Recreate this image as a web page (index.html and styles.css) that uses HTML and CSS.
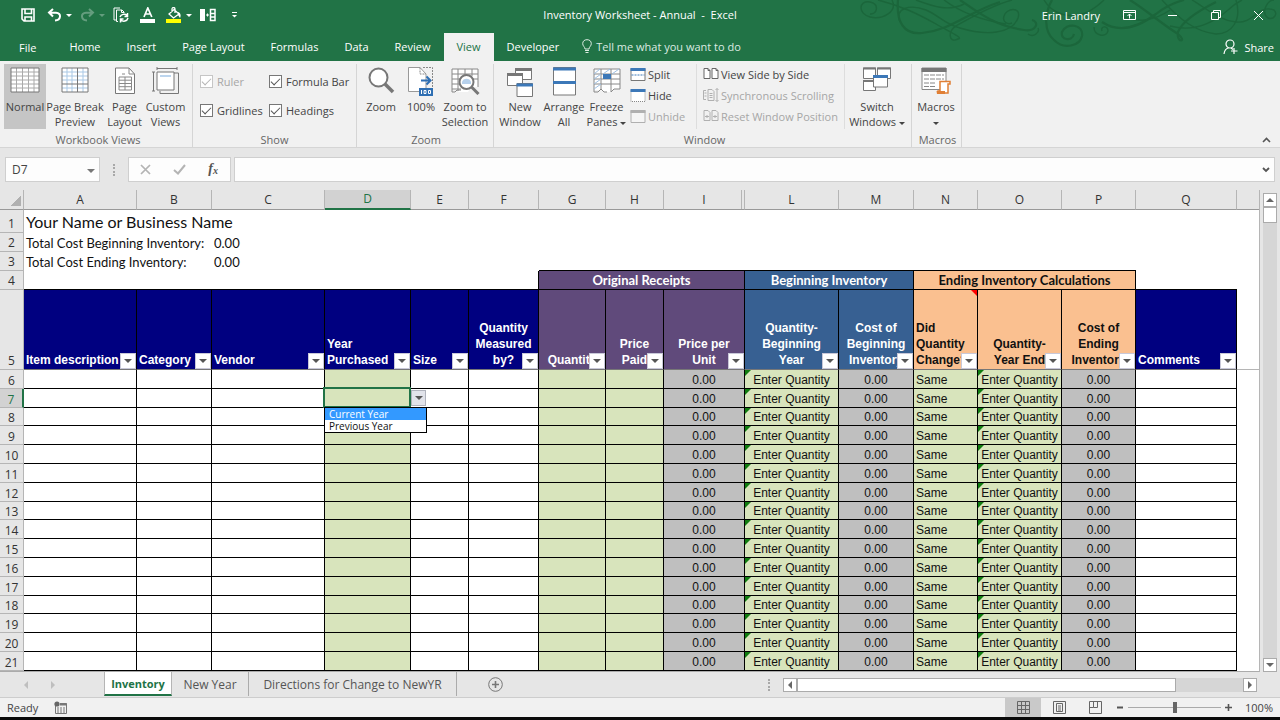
FILE: index.html
```html
<!DOCTYPE html>
<html lang="en">
<head>
<meta charset="utf-8">
<title>Inventory Worksheet - Annual - Excel</title>
<link rel="stylesheet" href="styles.css">
</head>
<body>
<header class="top">
  <svg class="swirl" viewBox="0 0 440 61" width="440" height="61" aria-hidden="true">
    <g class="swirl-lines">
      <path d="M52 0C58 12 42 20 30 17C18 14 18 0 30 2C40 4 37 15 30 14"/>
      <path d="M38 0C62 6 78 14 96 24C110 32 124 38 118 39C108 44 108 30 116 26C130 18 150 6 172 0"/>
      <path class="bold" d="M58 0C56 22 64 35 82 33C112 30 128 12 160 2"/>
      <path d="M60 22C54 8 70 4 86 10C100 16 104 24 120 28C146 36 172 34 178 18C182 6 166 8 164 16C162 22 168 25 172 23"/>
      <path d="M76 0C92 6 108 12 124 4M104 0C120 12 140 20 166 24"/>
      <path class="bold" d="M120 0C140 14 156 26 184 30C196 32 200 22 192 20M212 0C204 14 204 32 214 40C224 50 240 46 242 36C244 24 226 22 222 32C220 40 232 42 234 34"/>
      <path d="M204 0C212 14 230 20 248 12C258 6 262 2 264 0M188 34C194 38 200 32 198 28M254 27C254 36 266 38 268 31C268 25 260 26 262 31"/>
      <path class="bold" d="M262 22C280 34 300 26 316 14C326 6 336 2 344 0M290 0C306 10 322 24 338 34C348 42 336 44 338 32C342 22 356 12 376 2"/>
      <path d="M322 0C340 20 356 32 376 34C392 34 402 20 396 0M330 26C352 32 372 24 388 10C394 4 398 2 402 0"/>
      <path d="M282 16C296 24 316 20 330 10M352 0C366 8 378 20 396 22C414 24 418 4 434 10C438 14 434 20 428 18C420 12 428 0 434 0"/>
    </g>
  </svg>
  <div class="title-bar">
    <div class="quick">
      <button aria-label="Save"><svg width="14" height="14" viewBox="0 0 14 14"><path d="M1 1H13V13H3L1 11Z M4 1V5.500H10.500V1 M4 13V9H10.500V13" fill="none" stroke="#fff" stroke-width="1.600"/></svg></button>
      <button class="split" aria-label="Undo"><svg width="15" height="14" viewBox="0 0 15 14"><path d="M6 1L2 4.500L6 8.500M2 4.700H9C15 5 14 12 8 12.500" fill="none" stroke="#fff" stroke-width="2"/></svg><i class="caret"></i></button>
      <button class="split faded" aria-label="Redo"><svg width="15" height="14" viewBox="0 0 15 14"><path d="M9 1L13 4.500L9 8.500M13 4.700H6C0 5 1 12 7 12.500" fill="none" stroke="#fff" stroke-width="2"/></svg><i class="caret"></i></button>
      <button aria-label="Refresh"><svg width="16" height="16" viewBox="0 0 16 16" fill="none" stroke="#fff"><path d="M4 13H1V1H7M5 14.500H3.500V3H9L11 5V6M8.500 3V5.500H11"/><path d="M7 10C8 7 12 6.500 14 8.500M14.500 6V9.500H11.500M15 11C14 14.500 10 15 8 13M7.500 15.500V12H10.500" stroke-width="1.500"/></svg></button>
      <button aria-label="Font Color"><svg width="16" height="16" viewBox="0 0 16 16"><path d="M4 10L7.800 1L11.800 10M5.300 7H10.500" fill="none" stroke="#fff" stroke-width="1.700"/><path d="M0 12H15V16H0Z" fill="#fff"/></svg></button>
      <button class="split" aria-label="Fill Color"><svg width="16" height="16" viewBox="0 0 16 16"><path d="M3 7L8 2.500L13 7L7.500 11Z M6 5V2C6 0 9 0 9 2V6" fill="none" stroke="#fff" stroke-width="1.300"/><path d="M12 5C15 6 15 9 14 11L12 8Z" fill="#fff"/><path d="M0 12H15V16H0Z" fill="#ff0"/></svg><i class="caret"></i></button>
      <button aria-label="Column Width"><svg width="16" height="14" viewBox="0 0 16 14"><path d="M0 1H5V13H0Z" fill="#fff"/><path d="M6 7H9M7.500 5.500V8.500" stroke="#fff"/><path d="M10.500 1.500H15V12.500H10.500ZM10.500 5.500H15M10.500 9H15" fill="none" stroke="#fff" stroke-width="1.500"/></svg></button>
      <button aria-label="Customize Quick Access Toolbar"><svg width="7" height="8" viewBox="0 0 7 8"><path d="M1 1.500H6" stroke="#fff"/><path d="M1 4H6L3.500 6.500Z" fill="#fff"/></svg></button>
    </div>
    <h1 class="doc-title">Inventory Worksheet - Annual &nbsp;-&nbsp; Excel</h1>
    <div class="window-tools">
      <span class="user">Erin Landry</span>
      <button aria-label="Ribbon Display Options"><svg width="13" height="12" viewBox="0 0 13 12" fill="none" stroke="#fff"><path d="M.5 1.500H12.500V10.500H.5ZM.5 3.500H12.500M6.500 9.500V5M4.500 7L6.500 5L8.500 7"/></svg></button>
      <button aria-label="Minimize"><svg width="10" height="10" viewBox="0 0 10 10"><path d="M0 5.500H9" stroke="#fff"/></svg></button>
      <button aria-label="Restore"><svg width="10" height="10" viewBox="0 0 10 10" fill="none" stroke="#fff"><path d="M.5 2.500H7.500V9.500H.5ZM2.500 2.500V.5H9.500V7.500H7.500"/></svg></button>
      <button aria-label="Close"><svg width="11" height="11" viewBox="0 0 11 11"><path d="M1 1L10 10M10 1L1 10" stroke="#fff"/></svg></button>
    </div>
  </div>
  <nav class="tabs">
    <button class="file">File</button><button>Home</button><button>Insert</button><button>Page Layout</button><button>Formulas</button><button>Data</button><button>Review</button><button class="current">View</button><button>Developer</button>
    <button class="tell"><svg width="10" height="15" viewBox="0 0 10 15" fill="none" stroke="#dcebe2"><path d="M3 10C3 8 .7 7 .7 4.700C.7 2 2.500 .7 5 .7S9.300 2 9.300 4.700C9.300 7 7 8 7 10ZM3 11.500H7M3.500 13.500H6.500"/></svg>Tell me what you want to do</button>
    <button class="share"><svg width="15" height="16" viewBox="0 0 15 16" fill="none" stroke="#fff" stroke-width="1.200"><circle cx="7" cy="5" r="4"/><path d="M1 15C1.500 11 3 9.500 5.500 9M8 9L10 10.500M11 9V15M8 12H14.500"/></svg>Share</button>
  </nav>
</header>

<section class="ribbon">
  <div class="group views">
    <div class="tools">
      <button class="big active"><svg width="30" height="26" viewBox="0 0 30 26"><path d="M1 1H29V25H1Z" fill="#fff"/><path d="M1 5H29M1 9H29M1 13H29M1 17H29M1 21H29M6.500 1V25M12.500 1V25M18.500 1V25M24 1V25" stroke="#aaa"/><path d="M1 1H29V25H1Z" fill="none" stroke="#777"/></svg><span>Normal</span></button>
      <button class="big wide"><svg width="28" height="26" viewBox="0 0 28 26"><path d="M1 1H27V25H1Z" fill="#fff"/><path d="M1 5H27M1 9H27M1 13H27M1 21H27M6 1V25M11 1V25M22 1V25" stroke="#a9c8e5"/><path d="M1 1H27V25H1ZM1 17H27M16.500 1V25" fill="none" stroke="#777"/></svg><span>Page Break<br>Preview</span></button>
      <button class="big slim"><svg width="20" height="28" viewBox="0 0 20 28"><path d="M.5 1H14L19.500 7V26.500H.5Z" fill="#fff" stroke="#777"/><path d="M14 1V7H19.500M4 10H16.500V23H4ZM4 13.200H16.500M4 16.500H16.500M4 19.700H16.500M10 10V23M7 7H10" fill="none" stroke="#888"/></svg><span>Page<br>Layout</span></button>
      <button class="big slim"><svg width="27" height="28" viewBox="0 0 27 28" fill="none" stroke="#777"><path d="M5 1.500H25M5 0V3M25 0V3M1.500 5V24M0 5H3M0 24H3M22 6H26.500V26.500H8V24"/><path d="M5 5H22V23H5Z" fill="#fff"/><path d="M8 8H19V10H8Z" fill="#bcd5ee" stroke="none"/></svg><span>Custom<br>Views</span></button>
    </div>
    <p>Workbook Views</p>
  </div>
  <div class="group show">
    <div class="checks">
      <label class="off"><input type="checkbox" checked disabled>Ruler</label>
      <label><input type="checkbox" checked>Formula Bar</label>
      <label><input type="checkbox" checked>Gridlines</label>
      <label><input type="checkbox" checked>Headings</label>
    </div>
    <p>Show</p>
  </div>
  <div class="group zoom">
    <div class="tools">
      <button class="big"><svg width="27" height="28" viewBox="0 0 27 28"><circle cx="10.500" cy="10.500" r="9" fill="#fff" stroke="#777" stroke-width="2"/><path d="M17 17L25 25" stroke="#777" stroke-width="3.500"/></svg><span>Zoom</span></button>
      <button class="big slim"><svg width="26" height="29" viewBox="0 0 26 29"><path d="M.5 .5H12L18 7V24.500H.5Z" fill="#fff" stroke="#999"/><path d="M12 .5V7H18M15 .5H24.500V20" fill="none" stroke="#888" stroke-dasharray="2 1"/><path d="M13 13.500H22M18.500 9.500L22.500 13.500L18.500 17.500" fill="none" stroke="#2f6fb3" stroke-width="2"/><path d="M11 21H25V29H11Z" fill="#2f6fb3"/><path d="M13.500 23V27M16 23.500H18V26.500H16ZM20.500 23.500H22.500V26.500H20.500Z" fill="none" stroke="#fff"/></svg><span>100%</span></button>
      <button class="big"><svg width="29" height="28" viewBox="0 0 29 28"><path d="M1 2H27V20H20L17 25H8L5 23H1Z" fill="#fff"/><path d="M1 25V2H27V20M1 7H27M1 12H27M1 17H12M1 22H10M7 2V24M14 2V9M21 2V9M1 25H4L6 23H10" fill="none" stroke="#888"/><circle cx="15.500" cy="15" r="7" fill="#fff" stroke="#777" stroke-width="2"/><path d="M11 15A4.700 4.700 0 0 1 20 15V17H11Z" fill="#b7d1ec"/><path d="M20.500 20L27.500 27" stroke="#777" stroke-width="3"/></svg><span>Zoom to<br>Selection</span></button>
    </div>
    <p>Zoom</p>
  </div>
  <div class="group window">
    <div class="tools">
      <button class="big"><svg width="26" height="30" viewBox="0 0 26 30" fill="#fff" stroke="#777"><path d="M8.500 1.500H24.500V12.500H8.500Z"/><path d="M8 2.500H25" stroke-width="3"/><path d="M.5 6.500H15.500V18.500H.5Z"/><path d="M0 7.500H16" stroke-width="3"/><path d="M10 16.500H25.500V29.500H10Z"/><path d="M9.500 18H26" stroke="#3c78b8" stroke-width="3"/></svg><span>New<br>Window</span></button>
      <button class="big"><svg width="23" height="29" viewBox="0 0 23 29"><path d="M.5 .5H22.500V28H.5Z" fill="#fff" stroke="#777"/><path d="M0 2H23M0 15.500H23" stroke="#3c78b8" stroke-width="3"/></svg><span>Arrange<br>All</span></button>
      <button class="big slim"><svg width="28" height="27" viewBox="0 0 28 27"><path d="M1 2H27V22H21L18 25H11L8 23H1Z" fill="#fff"/><path d="M1 7H27M1 12H27M1 17H27M8 2V23M18 2V25M1 25V2H27V22H21L18 25M1 25H5L8 22L11 25H14" fill="none" stroke="#888"/><path d="M1 7L7 2M1 12L8 7M1 17L8 12M1 22L8 17M10 7L17 2M19 7L26 2" stroke="#9fc0e2"/><path d="M10 7H18V12H10Z" fill="#3c78b8"/></svg><span>Freeze<br>Panes <i class="caret"></i></span></button>
      <div class="small">
        <button><svg width="15" height="13" viewBox="0 0 15 13"><path d="M.5 .5H14.500V12.500H.5Z" fill="#fff" stroke="#777"/><path d="M0 1.500H15" stroke="#3c78b8" stroke-width="3"/><path d="M1 7H14" stroke="#3c78b8" stroke-dasharray="2 1"/></svg>Split</button>
        <button><svg width="15" height="13" viewBox="0 0 15 13"><path d="M.5 .5H14.500V12.500H.5Z" fill="#fff" stroke="#888" stroke-dasharray="1 1"/><path d="M0 1.500H15" stroke="#3c78b8" stroke-width="3"/></svg>Hide</button>
        <button disabled><svg width="15" height="13" viewBox="0 0 15 13"><path d="M.5 .5H14.500V12.500H.5Z" fill="#f5f5f5" stroke="#b0b0b0"/><path d="M0 1.500H15" stroke="#b0b0b0" stroke-width="3"/></svg>Unhide</button>
      </div>
      <div class="small side">
        <button><svg width="16" height="12" viewBox="0 0 16 12" fill="#fff" stroke="#666"><path d="M1 .5H5L7 2.500V10.500H1ZM9 .5H13L15 2.500V10.500H9ZM5 .5V2.500H7M13 .5V2.500H15"/></svg>View Side by Side</button>
        <button disabled><svg width="16" height="14" viewBox="0 0 16 14" fill="none" stroke="#b0b0b0"><path d="M3 2.500H.5V11.500H3M5 1.500H9L11 3.500V12.500H5ZM6.500 5.500H9.500M6.500 7.500H9.500M6.500 9.500H9.500M1.500 5H3.500M1.500 8H3.500M14 .5V13.500M12.500 2L14 .5L15.500 2M12.500 12L14 13.500L15.500 12"/></svg>Synchronous Scrolling</button>
        <button disabled><svg width="16" height="12" viewBox="0 0 16 12" fill="none" stroke="#b0b0b0"><path d="M1 .5H5L7 2.500V10.500H1ZM9 .5H13L15 2.500V10.500H9ZM2 6.500H6M4 5V8M10 6.500H14M12 5V8"/></svg>Reset Window Position</button>
      </div>
      <button class="big switch"><svg width="28" height="25" viewBox="0 0 28 25" fill="#fff" stroke="#777"><path d="M.5 1H12.500V11.500H.5ZM14.500 1H27.500V11.500H14.500ZM.5 13.500H12.500V23.500H.5Z"/><path d="M0 1.500H13M14 1.500H28M0 14H13" stroke-width="2"/><path d="M10.500 8.500H24.500V20H10.500Z"/><path d="M10 9.500H25" stroke="#3c78b8" stroke-width="3"/></svg><span>Switch<br>Windows <i class="caret"></i></span></button>
    </div>
    <p>Window</p>
  </div>
  <div class="group macros">
    <div class="tools">
      <button class="big"><svg width="30" height="28" viewBox="0 0 30 28"><path d="M1 1H25V22.500H1Z" fill="#fff" stroke="#888"/><path d="M.5 3H25.500" stroke="#777" stroke-width="4"/><path d="M3 8H23M3 12H23M3 16H15M3 19.500H14" stroke="#888" stroke-dasharray="5 1"/><path d="M19 14.500H29V17H27V26H17V24H19Z" fill="#fff" stroke="#e07f35" stroke-width="1.500"/><path d="M15.500 24H24V27H16Z" fill="#e07f35"/></svg><span>Macros<br><i class="caret"></i></span></button>
    </div>
    <p>Macros</p>
  </div>
  <button class="collapse" aria-label="Collapse the Ribbon"><svg width="9" height="6" viewBox="0 0 9 6"><path d="M1 5L4.500 1.500L8 5" fill="none" stroke="#555" stroke-width="1.600"/></svg></button>
</section>

<section class="formula">
  <div class="name-box"><input aria-label="Name Box" value="D7"><button aria-label="Name list"><i class="caret"></i></button></div>
  <span class="grip"></span>
  <div class="fx">
    <button aria-label="Cancel"><svg width="11" height="11" viewBox="0 0 11 11"><path d="M1 1L10 10M10 1L1 10" stroke="#b4b4b4" stroke-width="1.700"/></svg></button>
    <button aria-label="Enter"><svg width="13" height="11" viewBox="0 0 13 11"><path d="M1 6L5 9.500L12 1" fill="none" stroke="#b4b4b4" stroke-width="2"/></svg></button>
    <button class="fx-label" aria-label="Insert Function">f<sub>x</sub></button>
  </div>
  <div class="entry"><input aria-label="Formula Bar"><button aria-label="Expand Formula Bar"><svg width="8" height="6" viewBox="0 0 8 6"><path d="M1 1L4 4L7 1" fill="none" stroke="#555" stroke-width="1.800"/></svg></button></div>
</section>

<main class="sheet">
  <div class="grid-area">
    <table class="grid">
      <colgroup><col class="w-num"><col class="w-a"><col class="w-b"><col class="w-a"><col class="w-d"><col class="w-e"><col class="w-f"><col class="w-g"><col class="w-e"><col class="w-i"><col class="w-l"><col class="w-b"><col class="w-n"><col class="w-o"><col class="w-p"><col class="w-q"><col></colgroup>
      <thead>
        <tr class="letters"><th class="corner"></th><th>A</th><th>B</th><th>C</th><th class="picked">D</th><th>E</th><th>F</th><th>G</th><th>H</th><th class="hidden-next">I</th><th>L</th><th>M</th><th>N</th><th>O</th><th>P</th><th>Q</th><th></th></tr>
      </thead>
      <tbody class="summary">
        <tr class="r1"><th>1</th><td colspan="3">Your Name or Business Name</td><td colspan="13"></td></tr>
        <tr><th>2</th><td colspan="2">Total Cost Beginning Inventory:</td><td>0.00</td><td colspan="13"></td></tr>
        <tr class="r3"><th>3</th><td colspan="2">Total Cost Ending Inventory:</td><td>0.00</td><td colspan="3"></td><td colspan="8" class="lid"></td><td colspan="2"></td></tr>
        <tr class="bands"><th>4</th><td colspan="6" class="edge"></td><td colspan="3" class="purple">Original Receipts</td><td colspan="2" class="steel">Beginning Inventory</td><td colspan="3" class="peach">Ending Inventory Calculations</td><td class="under"></td><td></td></tr>
      </tbody>
      <tbody class="heads"><tr id="heads"><th>5</th></tr></tbody>
      <tbody class="rows" id="rows"></tbody>
    </table>
  </div>
  <div class="vscroll">
    <button aria-label="Scroll up"><i class="tri up"></i></button>
    <div class="thumb"></div>
    <div class="track"></div>
    <button aria-label="Scroll down"><i class="tri down"></i></button>
  </div>
</main>

<nav class="sheet-bar">
  <div class="sheet-nav"><i class="tri left"></i><i class="tri right"></i></div>
  <div class="sheet-tabs">
    <button class="current">Inventory</button><button class="year">New Year</button><button class="dir">Directions for Change to NewYR</button>
    <button class="add" aria-label="New sheet"><svg width="15" height="15" viewBox="0 0 15 15" fill="none" stroke="#777"><circle cx="7.500" cy="7.500" r="6.800"/><path d="M7.500 4V11M4 7.500H11" stroke-width="1.600"/></svg></button>
  </div>
  <span class="grip"></span>
  <div class="hscroll">
    <button aria-label="Scroll left"><i class="tri left"></i></button>
    <div class="thumb"></div><div class="track"></div>
    <button aria-label="Scroll right"><i class="tri right"></i></button>
  </div>
</nav>

<footer class="status">
  <span class="ready">Ready</span>
  <button class="rec" aria-label="Record Macro"><svg width="13" height="13" viewBox="0 0 13 13"><path d="M1.500 5V12.500H12.500V2.500H6" fill="none" stroke="#777"/><path d="M6 2H12.500V4.500H6Z" fill="#777"/><circle cx="3" cy="3" r="2.600" fill="#666"/><path d="M3 7H11M3 9H11M3 11H11" stroke="#777" stroke-dasharray="2 1"/></svg></button>
  <div class="status-right">
    <button class="mode on" aria-label="Normal view"><svg width="13" height="13" viewBox="0 0 13 13"><path d="M.5 .5H12.500V12.500H.5ZM.5 4.500H12.500M.5 8.500H12.500M4.500 .5V12.500M8.500 .5V12.500" fill="none" stroke="#666"/></svg></button>
    <button class="mode" aria-label="Page layout view"><svg width="13" height="13" viewBox="0 0 13 13"><path d="M.5 .5H12.500V12.500H.5ZM3.500 2.500H9.500V10.500H3.500ZM5 5H8M5 7H8M5 9H8" fill="none" stroke="#666"/></svg></button>
    <button class="mode" aria-label="Page break view"><svg width="13" height="13" viewBox="0 0 13 13"><path d="M.5 .5H12.500V12.500H.5ZM4.500 .5V6.500H.500M4.500 6.500H8.500V.5" fill="none" stroke="#666"/></svg></button>
    <button class="step" aria-label="Zoom out"><svg width="7" height="7" viewBox="0 0 7 7"><path d="M0 3.500H6" stroke="#555" stroke-width="2"/></svg></button>
    <input type="range" aria-label="Zoom" min="0" max="100" value="50">
    <button class="step" aria-label="Zoom in"><svg width="7" height="7" viewBox="0 0 7 7"><path d="M0 3.500H7M3.500 0V7" stroke="#555" stroke-width="1.600"/></svg></button>
    <span class="percent">100%</span>
  </div>
</footer>
<script src="sheet.js"></script>
</body>
</html>
```

FILE: styles.css
```css
* { box-sizing: border-box; }
body { margin: 0; height: 100vh; display: flex; flex-direction: column; overflow: hidden; background: #e6e6e6; color: #444; font-family: "Open Sans", "Noto Sans", sans-serif; font-size: 11px; line-height: 15px; border-bottom: 3px solid #0a0a0a; }
button { font: inherit; color: inherit; background: none; border: 0; padding: 0; }
input { font: inherit; color: inherit; }
p, h1 { margin: 0; }
svg { display: block; flex: none; }
.caret { display: inline-block; border: 3px solid transparent; border-top-color: currentColor; border-bottom: 0; vertical-align: middle; }
.tri { display: block; width: 0; height: 0; border: 4px solid transparent; }
.tri.up { border-bottom-color: #666; border-top: 0; }
.tri.down { border-top-color: #666; border-bottom: 0; }
.tri.left { border-right-color: #666; border-left: 0; }
.tri.right { border-left-color: #666; border-right: 0; }

.top { position: relative; flex: none; background: #217346; color: #fff; }
.swirl { position: absolute; top: 0; right: 0; }
.swirl-lines { fill: none; stroke: #1b663b; stroke-width: 1.4; }
.swirl-lines .bold { stroke-width: 2.2; }
.title-bar { position: relative; display: grid; grid-template-columns: 1fr auto 1fr; align-items: center; height: 30px; }
.quick { display: flex; padding-left: 14px; }
.quick button { width: 27px; height: 30px; display: flex; align-items: center; justify-content: center; }
.quick .split { width: 33px; justify-content: flex-end; gap: 4px; padding-right: 2px; }
.quick .faded { opacity: .3; }
.doc-title { font-size: 11px; font-weight: 400; line-height: 14px; }
.window-tools { display: flex; justify-content: flex-end; align-items: center; }
.user { margin-right: 8px; }
.window-tools button { width: 43px; height: 29px; display: grid; place-items: center; }
.tabs { position: relative; display: flex; height: 31px; padding-top: 3px; }
.tabs button { padding: 0 13px 1px; }
.tabs .file { padding: 0 20px 0 19px; }
.tabs .current { background: #f1f1f1; color: #217346; }
.tabs .tell { display: flex; align-items: center; gap: 4px; color: #dcebe2; padding-left: 10px; }
.tabs .share { display: flex; align-items: center; gap: 6px; margin-left: auto; padding: 0 6px; }

.ribbon { position: relative; flex: none; display: flex; height: 87px; padding: 3px 0 0; background: #f1f1f1; border-bottom: 1px solid #d5d5d5; }
.group { display: flex; flex-direction: column; justify-content: space-between; border-right: 1px solid #d5d5d5; }
.group p { text-align: center; color: #666; }
.views { width: 193px; padding-left: 4px; }
.show { width: 164px; }
.zoom { width: 137px; padding-left: 2px; }
.window { width: 418px; padding-left: 4px; }
.macros { width: 50px; padding-left: 2px; }
.tools { display: flex; }
.big { width: 44px; height: 65px; display: flex; flex-direction: column; align-items: center; white-space: nowrap; }
.big svg { margin: 3px 0 auto; }
.big span { min-height: 30px; }
.views .active { width: 42px; background: #c5c5c5; }
.big.wide { width: 58px; }
.big.slim { width: 41px; }
.zoom .slim { width: 36px; }
.zoom .big:last-child { width: 52px; }
.small { display: flex; flex-direction: column; gap: 5px; width: 69px; padding: 2px 0 0 3px; }
.small button { display: flex; align-items: center; gap: 2px; white-space: nowrap; height: 16px; }
.small button:disabled { color: #a6a6a6; }
.small svg { width: 16px; }
.small.side { width: 149px; border-left: 1px solid #ddd; padding-left: 6px; border-right: 1px solid #ddd; }
.switch { width: 64px; }
.checks { display: grid; grid-template-columns: 69px 1fr; row-gap: 14px; padding: 10px 0 0 7px; white-space: nowrap; }
.checks label { display: flex; align-items: center; gap: 4px; }
.checks .off { color: #a6a6a6; }
.checks input { appearance: none; width: 13px; height: 13px; margin: 0; border: 1px solid #777; background: #fff; display: grid; place-items: center; }
.checks input::before { content: ""; width: 8px; height: 4px; border: solid #555; border-width: 0 0 1px 1px; transform: rotate(-45deg); margin-bottom: 3px; }
.checks input:disabled { border-color: #c6c6c6; }
.checks input:disabled::before { border-color: #b5b5b5; }
.collapse { margin: auto 9px 1px auto; height: 12px; }

.formula { flex: none; display: flex; height: 42px; padding: 9px 5px 8px; }
.name-box, .fx, .entry { display: flex; align-items: center; background: #fdfdfd; border: 1px solid #cfcfcf; }
.name-box { width: 95px; }
.name-box input, .entry input { flex: 1; min-width: 0; border: 0; background: none; outline: 0; padding: 0 6px; font-size: 12px; }
.name-box button, .entry button { padding: 0 4px; }
.name-box .caret { border-width: 4px 4px 0; color: #777; }
.grip { width: 2px; height: 12px; margin: auto 13px; border-left: 2px dotted #a8a8a8; }
.fx { width: 103px; margin-right: 3px; }
.fx button { flex: 1; display: grid; place-items: center; }
.fx .fx-label { display: block; font: italic bold 14px/16px "Liberation Serif", serif; color: #555; }
.fx-label sub { font-size: 10px; vertical-align: -1px; }
.entry { flex: 1; }

.sheet { flex: 1; min-height: 0; display: flex; }
.grid-area { flex: 1; min-width: 0; overflow: hidden; background: #fff; border-right: 1px solid #b5b5b5; border-bottom: 1px solid #ababab; }
.grid { width: 100%; table-layout: fixed; border-collapse: separate; border-spacing: 0; color: #111; font: 12px/16px "Liberation Sans", Arial, sans-serif; }
.grid td, .grid th { padding: 0 2px; position: relative; white-space: nowrap; }
.w-num { width: 24px; } .w-a { width: 113px; } .w-b { width: 75px; } .w-d { width: 86px; }
.w-e { width: 58px; } .w-f { width: 70px; } .w-g { width: 67px; } .w-i { width: 81px; }
.w-l { width: 94px; } .w-n { width: 64px; } .w-o { width: 84px; } .w-p { width: 74px; } .w-q { width: 101px; }
.grid th { background: #e6e6e6; border-right: 1px solid #b5b5b5; border-bottom: 1px solid #b5b5b5; font: 12px/16px "Open Sans", "Noto Sans", sans-serif; color: #333; }
.grid tbody th { vertical-align: bottom; padding: 0; }
.letters th { height: 20px; border-bottom-color: #999; }
.letters th:last-child { border-right: 0; }
.letters .corner { background: linear-gradient(135deg, transparent 50%, #b0b0b0 50%) 10px 5px / 11px 11px no-repeat #e6e6e6; }
.grid .letters .picked { background: #d2d2d2; color: #217346; border-bottom: 2px solid #217346; }
.letters .hidden-next::after { content: ""; position: absolute; top: 0; bottom: 0; right: 2px; border-left: 1px solid #b5b5b5; }
.summary tr { height: 19px; }
.summary .r1 { height: 23px; }
.summary td { font: 13px/17px Lato, "Open Sans", sans-serif; }
.grid .summary tr:not(.bands) td { padding-top: 1px; }
.summary .r1 td { font-size: 16px; line-height: 20px; }
.summary .lid { border-bottom: 1px solid #000; }
.summary .bands td { text-align: center; font-weight: 700; border-bottom: 1px solid #000; border-right: 1px solid #000; }
.summary .bands .under { border-right: 0; }
.summary .bands td:last-child { border: 0; }
.grid .purple { background: #604a7b; color: #fff; }
.grid .steel { background: #376092; color: #fff; }
.grid .peach { background: #fac090; color: #111; }
.grid .navy { background: #000080; color: #fff; }
.heads tr { height: 80px; }
.grid .heads td { vertical-align: bottom; font-size: 12px; font-weight: 700; border-right: 1px solid #000; border-bottom: 1px solid #777; padding-bottom: 1px; }
.grid .heads td:last-child { border-right: 0; border-bottom-color: #b5b5b5; }
.heads .mid { text-align: center; }
.heads button { position: absolute; right: 0; bottom: 0; width: 16px; height: 16px; background: #fff; border: 1px solid #c8c8d8; color: #555; display: grid; place-items: center; }
.heads .caret, .pick .caret { border-width: 4px 4px 0; }
.heads .note::after { content: ""; position: absolute; top: 0; right: 0; border: 3px solid; border-color: #f00 #f00 transparent transparent; }
.rows tr { height: 19px; }
.rows tr:nth-child(5n+3) { height: 18px; }
.grid .rows td { line-height: 15px; padding-top: 2px; border-right: 1px solid #000; border-bottom: 1px solid #000; }
.grid .rows td:last-child { border: 0; }
.grid .rows th { line-height: 15px; }
.rows .green { background: #d8e4bc; }
.rows .grey { background: #bfbfbf; text-align: center; }
.rows .center { text-align: center; }
.rows .flag::before { content: ""; position: absolute; top: 0; left: 0; border: 3px solid; border-color: #107c10 transparent transparent #107c10; }
.grid .rows .picked { background: #d2d2d2; color: #217346; border-right: 2px solid #217346; }
.selection { position: absolute; z-index: 1; inset: -2px -1px -1px -2px; border: 2px solid #217346; }
.pick { position: absolute; z-index: 2; left: 100%; top: 1px; margin-left: 1px; width: 15px; height: 16px; background: #e1e3ea; border: 1px solid #b0b3bd; color: #555; display: grid; place-items: center; }
.choices { position: absolute; z-index: 3; top: 100%; left: -1px; width: 103px; margin: 0; padding: 0; list-style: none; background: #fff; border: 1px solid #000; font: 10px/12px "Open Sans", "Noto Sans", sans-serif; }
.choices li { padding: 0 4px; }
.choices .on { background: #3399ff; color: #fff; }

.vscroll { flex: none; width: 20px; padding: 3px 3px 0; display: flex; flex-direction: column; }
.vscroll button, .hscroll button { flex: none; width: 14px; height: 14px; background: #fff; border: 1px solid #ababab; display: grid; place-items: center; }
.thumb { background: #fff; border: 1px solid #ababab; }
.vscroll .thumb { height: 16px; }
.track { flex: 1; background: #d6d6d6; }

.sheet-bar { flex: none; display: flex; height: 26px; border-bottom: 1px solid #cdcdcd; font-size: 12px; }
.sheet-nav { width: 104px; display: flex; align-items: center; gap: 23px; padding-left: 24px; }
.sheet-nav .tri { opacity: .3; }
.sheet-tabs { flex: 1; display: flex; align-items: flex-start; white-space: nowrap; }
.sheet-tabs button { height: 24px; color: #555; }
.sheet-tabs .current { width: 68px; background: #fff; color: #217346; font-size: 11px; font-weight: 700; border-bottom: 2px solid #217346; border-left: 1px solid #b5b5b5; border-right: 1px solid #b5b5b5; }
.sheet-tabs .year { width: 77px; border-right: 1px solid #ababab; }
.sheet-tabs .dir { width: 208px; border-right: 1px solid #ababab; }
.sheet-tabs .add { width: 77px; display: grid; place-items: center; }
.hscroll { width: 497px; display: flex; align-items: center; padding-right: 23px; }
.hscroll .thumb { flex: 378; height: 14px; }
.hscroll .track { flex: 67; height: 14px; }

.status { flex: none; height: 19px; display: flex; align-items: center; background: #f1f1f1; padding: 0 7px; }
.rec { margin-left: 16px; }
.status-right { display: flex; align-items: center; height: 19px; margin-left: auto; }
.mode { width: 36px; height: 19px; display: grid; place-items: center; }
.mode.on { background: #c9c9c9; }
.step { width: 15px; display: grid; place-items: center; }
.status input { appearance: none; width: 93px; height: 12px; margin: 0; background: linear-gradient(#aaa, #aaa) center / 100% 1px no-repeat; }
.status input::-webkit-slider-thumb { appearance: none; width: 4px; height: 11px; background: #666; }
.percent { width: 37px; text-align: right; }
```

FILE: sheet.js
```js
const heads = [
  ["navy", "Item description"], ["navy", "Category"], ["navy", "Vendor"], ["navy", "Year<br>Purchased"],
  ["navy", "Size"], ["navy mid", "Quantity<br>Measured<br>by?"], ["purple mid", "Quantity"],
  ["purple mid", "Price<br>Paid"], ["purple mid", "Price per<br>Unit"],
  ["steel mid", "Quantity-<br>Beginning<br>Year"], ["steel mid", "Cost of<br>Beginning<br>Inventory"],
  ["peach note", "Did<br>Quantity<br>Change?"], ["peach mid", "Quantity-<br>Year End"],
  ["peach mid", "Cost of<br>Ending<br>Inventory"], ["navy", "Comments"]
];
document.getElementById("heads").innerHTML += heads.map(([cls, text]) =>
  `<td class="${cls}">${text}<button aria-label="Filter"><i class="caret"></i></button></td>`).join("") + "<td></td>";

const cells = [
  ["", ""], ["", ""], ["", ""], ["green", ""], ["", ""], ["", ""], ["green", ""], ["green", ""],
  ["grey", "0.00"], ["green center flag", "Enter Quantity"], ["grey", "0.00"], ["green", "Same"],
  ["green center flag", "Enter Quantity"], ["grey", "0.00"], ["", ""], ["", ""]
];
const picker = `<span class="selection"></span>
  <button class="pick" aria-label="Open list"><i class="caret"></i></button>
  <ul class="choices" role="listbox"><li class="on" role="option" aria-selected="true">Current Year</li><li role="option">Previous Year</li></ul>`;
const lastRow = 21;
let html = "";
// One unlabelled row follows the last so the grid runs on to the edge.
for (let n = 6; n <= lastRow + 1; n++) {
  const blank = n > lastRow;
  html += `<tr><th${n === 7 ? ' class="picked"' : ""}>${blank ? "" : n}</th>` + cells.map(([cls, text], i) =>
    `<td class="${cls}">${blank ? "" : n === 7 && i === 3 ? picker : text}</td>`).join("") + "</tr>";
}
document.getElementById("rows").innerHTML = html;
```
